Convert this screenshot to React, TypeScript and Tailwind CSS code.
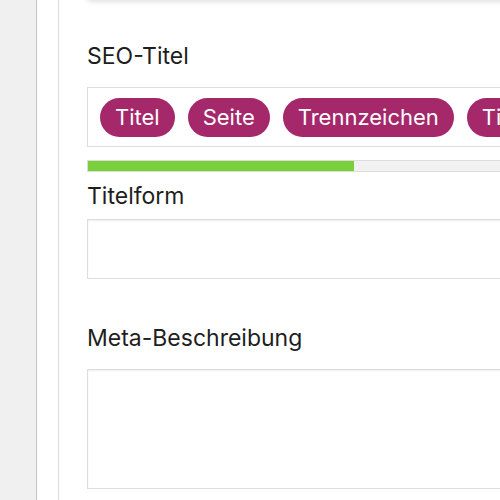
// SEO meta box: title snippet tokens, length bar, title form and meta description fields.

const TITLE_TOKENS = ["Titel", "Seite", "Trennzeichen", "Titel"];

function FieldLabel({ children, className = "" }: { children: React.ReactNode; className?: string }) {
    return <p className={`text-[23px] leading-[28px] text-[#1e1e1e] ${className}`}>{children}</p>;
}

export default function App() {
    return (
        <div className="flex h-[500px] w-[500px] overflow-hidden bg-white font-['Inter',sans-serif]">
            {/* admin sidebar edge */}
            <div className="w-[37px] shrink-0 border-r border-[#c3c4c7] bg-[#f0f0f1]" />
            <div className="w-[22px] shrink-0 border-r border-[#dcdcde] bg-white" />

            <div className="min-w-0 flex-1 overflow-hidden pl-[28px]">
                <div className="w-[640px]">
                    {/* bottom of the panel above */}
                    <div className="-ml-[2px] -mt-[24px] h-[24px] rounded-b-lg bg-white shadow-[0_2px_5px_rgba(0,0,0,0.12)]" />

                    <FieldLabel className="mt-[42px]">SEO-Titel</FieldLabel>
                    <div className="mt-[17px] flex h-[60px] items-center gap-[13px] border border-[#dddddd] pl-[12px]">
                        {TITLE_TOKENS.map((token, i) => (
                            <span
                                key={i}
                                className="flex h-[39px] shrink-0 items-center rounded-full bg-[#a4286a] px-[15px] text-[22px] text-white"
                            >
                                {token}
                            </span>
                        ))}
                    </div>

                    {/* title length indicator */}
                    <div className="mt-[13px] h-[12px] border border-[#dddddd] bg-[#f1f1f1]">
                        <div className="h-full w-[266px] bg-[#7ad03a]" />
                    </div>

                    <FieldLabel className="mt-[10px]">Titelform</FieldLabel>
                    <div className="mt-[9px] h-[60px] border border-[#dddddd] bg-white shadow-[inset_0_1px_2px_rgba(0,0,0,0.07)]" />

                    <FieldLabel className="mt-[45px]">Meta-Beschreibung</FieldLabel>
                    <div className="mt-[17px] h-[120px] border border-[#dddddd] bg-white shadow-[inset_0_1px_2px_rgba(0,0,0,0.07)]" />
                </div>
            </div>
        </div>
    );
}
